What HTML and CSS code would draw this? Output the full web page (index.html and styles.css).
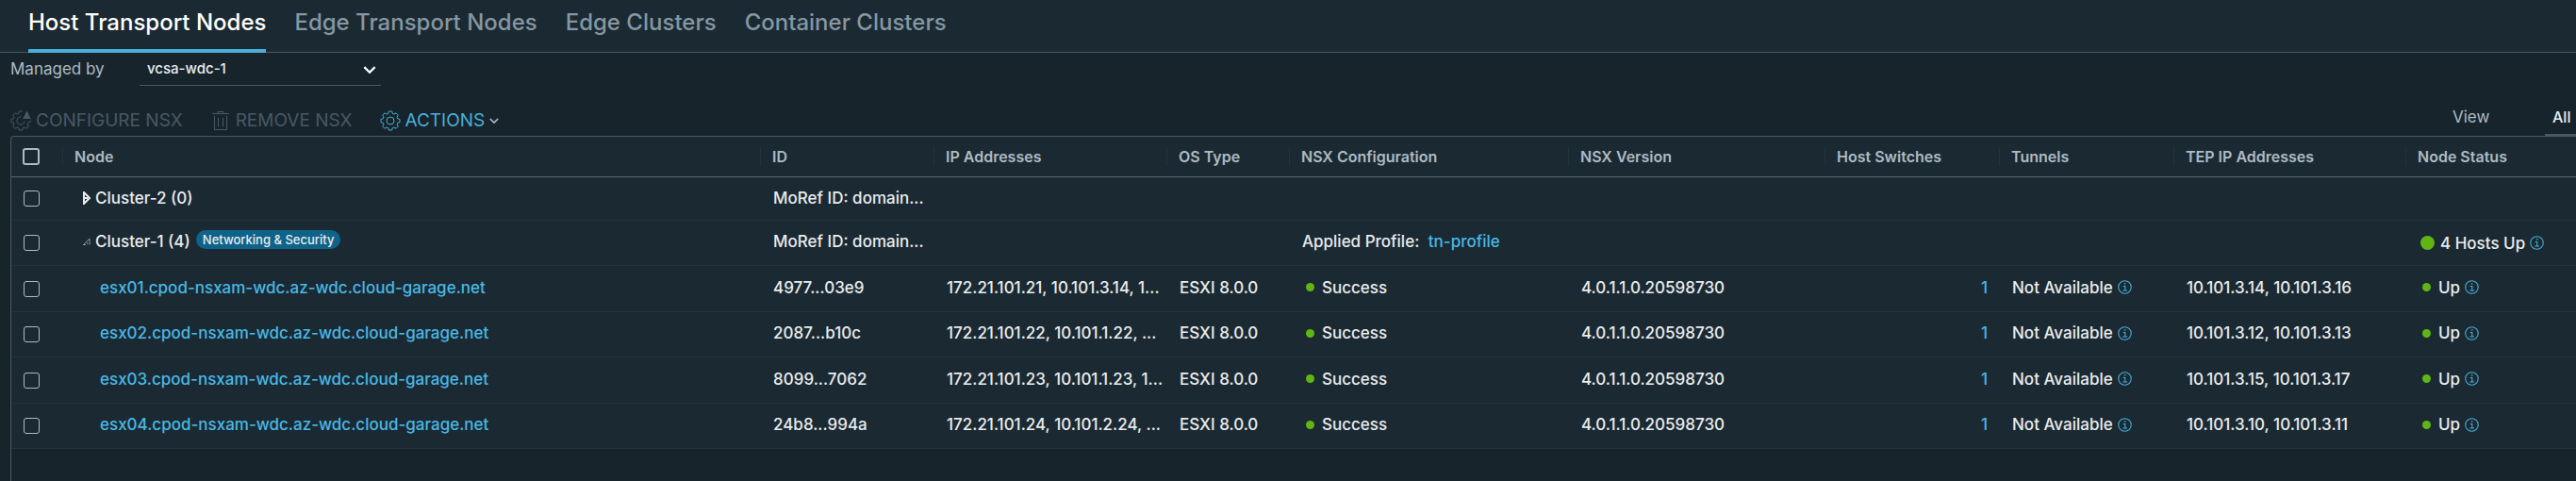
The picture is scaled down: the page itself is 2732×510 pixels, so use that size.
FILE: index.html
```html
<!DOCTYPE html>
<html lang="en">
<head>
<meta charset="utf-8">
<title>Host Transport Nodes</title>
<link rel="stylesheet" href="styles.css">
</head>
<body>
<svg class="sprite" aria-hidden="true">
  <symbol id="gear" viewBox="0 0 22 22">
    <path d="M9.300 1h3.400l.5 2.400 1.700.7 2.100-1.300 2.300 2.300-1.300 2.100.7 1.700 2.300.5v3.300l-2.300.5-.7 1.700 1.300 2.100-2.300 2.300-2.100-1.300-1.700.7-.5 2.300H9.300l-.5-2.300-1.700-.7-2.100 1.300-2.300-2.300 1.300-2.100-.7-1.700-2.300-.5V9.400l2.300-.5.7-1.700-1.300-2.100 2.300-2.300 2.100 1.300 1.700-.7z"/>
    <circle cx="11" cy="11" r="4"/>
  </symbol>
  <symbol id="gear-alert" viewBox="0 0 22 22">
    <path d="M12.500 1H9.300l-.5 2.400-1.700.7L5 2.800 2.700 5.100 4 7.200l-.7 1.700-2.300.5v3.300l2.300.5.7 1.700-1.300 2.100L5 19.300l2.100-1.300 1.700.7.5 2.300h3.400l.5-2.300 1.700-.7 2.100 1.300 2.300-2.300-1.300-2.100.7-1.700 2.300-.5V10.500"/>
    <path d="M11.500 7a4 4 0 1 0 3.500 4.500"/>
    <path class="solid" d="M17.500.5l4.200 8.500h-8.400z"/>
  </symbol>
  <symbol id="trash" viewBox="0 0 18 22">
    <path d="M2.500 6v14.500h13V6M0 3.500h18M6 3.500V1.500h6v2M6.500 8v9.500M11.500 8v9.500"/>
  </symbol>
  <symbol id="caret" viewBox="0 0 12 8"><path d="M1 1l5 5 5-5"/></symbol>
  <symbol id="info" viewBox="0 0 14 14">
    <circle cx="7" cy="7" r="6.300"/>
    <path d="M5.300 6H7.300v4.300M5 10.300h4.400M6.400 3.600h1.500"/>
  </symbol>
  <symbol id="closed" viewBox="0 0 8 14"><path d="M1 1l6 6-6 6zM2 7h3"/></symbol>
  <symbol id="open" viewBox="0 0 8 8"><path d="M0 7.500h3M1 7l6-6v6.500M4 5l1 2"/></symbol>
</svg>

<nav class="tabs">
  <a class="tab active" href="#host" aria-current="page">Host Transport Nodes</a>
  <a class="tab" href="#edge">Edge Transport Nodes</a>
  <a class="tab" href="#edge-clusters">Edge Clusters</a>
  <a class="tab" href="#containers">Container Clusters</a>
</nav>

<main>
  <div class="managed">
    <label for="manager">Managed by</label>
    <div class="select">
      <select id="manager"><option>vcsa-wdc-1</option></select>
      <svg class="caret"><use href="#caret"/></svg>
    </div>
  </div>

  <div class="toolbar">
    <button class="action" type="button" disabled><svg class="tool"><use href="#gear-alert"/></svg>CONFIGURE NSX</button>
    <button class="action" type="button" disabled><svg class="tool"><use href="#trash"/></svg>REMOVE NSX</button>
    <button class="action live" type="button"><svg class="tool"><use href="#gear"/></svg>ACTIONS<svg class="drop"><use href="#caret"/></svg></button>
    <div class="view">
      <label for="view">View</label>
      <select id="view"><option>All</option></select>
    </div>
  </div>

  <table class="grid">
    <colgroup>
      <col class="c-check"><col><col class="c-id"><col class="c-ip"><col class="c-os"><col class="c-config">
      <col class="c-version"><col class="c-switch"><col class="c-switch"><col class="c-tep"><col class="c-status">
    </colgroup>
    <thead>
      <tr>
        <th class="check"><input type="checkbox" aria-label="Select all"></th>
        <th><span>Node</span></th><th><span>ID</span></th><th><span>IP Addresses</span></th><th><span>OS Type</span></th>
        <th><span>NSX Configuration</span></th><th><span>NSX Version</span></th><th><span>Host Switches</span></th>
        <th><span>Tunnels</span></th><th><span>TEP IP Addresses</span></th><th><span>Node Status</span></th>
      </tr>
    </thead>
    <tbody>
      <tr>
        <td class="check"><input type="checkbox" aria-label="Select Cluster-2"></td>
        <td><div class="cluster"><svg class="twist"><use href="#closed"/></svg>Cluster-2 (0)</div></td>
        <td>MoRef ID: domain...</td><td></td><td></td><td></td><td></td><td></td><td></td><td></td><td></td>
      </tr>
      <tr>
        <td class="check"><input type="checkbox" aria-label="Select Cluster-1"></td>
        <td><div class="cluster"><svg class="twist small"><use href="#open"/></svg>Cluster-1 (4)<span class="badge">Networking &amp; Security</span></div></td>
        <td>MoRef ID: domain...</td><td></td><td></td>
        <td>Applied Profile: <a class="profile" href="#profile">tn-profile</a></td>
        <td></td><td></td><td></td><td></td>
        <td><div class="status summary"><i class="dot large"></i>4 Hosts Up<svg class="info"><use href="#info"/></svg></div></td>
      </tr>
      <tr>
        <td class="check"><input type="checkbox" aria-label="Select esx01"></td>
        <td class="host"><a href="#esx01">esx01.cpod-nsxam-wdc.az-wdc.cloud-garage.net</a></td>
        <td>4977...03e9</td><td>172.21.101.21, 10.101.3.14, 1...</td><td>ESXI 8.0.0</td>
        <td><div class="status"><i class="dot"></i>Success</div></td><td>4.0.1.1.0.20598730</td>
        <td class="count"><a href="#sw1">1</a></td>
        <td><div class="note">Not Available<svg class="info"><use href="#info"/></svg></div></td>
        <td>10.101.3.14, 10.101.3.16</td>
        <td><div class="status"><i class="dot"></i>Up<svg class="info"><use href="#info"/></svg></div></td>
      </tr>
      <tr>
        <td class="check"><input type="checkbox" aria-label="Select esx02"></td>
        <td class="host"><a href="#esx02">esx02.cpod-nsxam-wdc.az-wdc.cloud-garage.net</a></td>
        <td>2087...b10c</td><td>172.21.101.22, 10.101.1.22, ...</td><td>ESXI 8.0.0</td>
        <td><div class="status"><i class="dot"></i>Success</div></td><td>4.0.1.1.0.20598730</td>
        <td class="count"><a href="#sw2">1</a></td>
        <td><div class="note">Not Available<svg class="info"><use href="#info"/></svg></div></td>
        <td>10.101.3.12, 10.101.3.13</td>
        <td><div class="status"><i class="dot"></i>Up<svg class="info"><use href="#info"/></svg></div></td>
      </tr>
      <tr>
        <td class="check"><input type="checkbox" aria-label="Select esx03"></td>
        <td class="host"><a href="#esx03">esx03.cpod-nsxam-wdc.az-wdc.cloud-garage.net</a></td>
        <td>8099...7062</td><td>172.21.101.23, 10.101.1.23, 1...</td><td>ESXI 8.0.0</td>
        <td><div class="status"><i class="dot"></i>Success</div></td><td>4.0.1.1.0.20598730</td>
        <td class="count"><a href="#sw3">1</a></td>
        <td><div class="note">Not Available<svg class="info"><use href="#info"/></svg></div></td>
        <td>10.101.3.15, 10.101.3.17</td>
        <td><div class="status"><i class="dot"></i>Up<svg class="info"><use href="#info"/></svg></div></td>
      </tr>
      <tr>
        <td class="check"><input type="checkbox" aria-label="Select esx04"></td>
        <td class="host"><a href="#esx04">esx04.cpod-nsxam-wdc.az-wdc.cloud-garage.net</a></td>
        <td>24b8...994a</td><td>172.21.101.24, 10.101.2.24, ...</td><td>ESXI 8.0.0</td>
        <td><div class="status"><i class="dot"></i>Success</div></td><td>4.0.1.1.0.20598730</td>
        <td class="count"><a href="#sw4">1</a></td>
        <td><div class="note">Not Available<svg class="info"><use href="#info"/></svg></div></td>
        <td>10.101.3.10, 10.101.3.11</td>
        <td><div class="status"><i class="dot"></i>Up<svg class="info"><use href="#info"/></svg></div></td>
      </tr>
    </tbody>
  </table>
  <div class="rest"></div>
</main>
</body>
</html>
```
FILE: styles.css
```css
* { box-sizing: border-box; }
body {
  margin: 0;
  min-height: 100vh;
  display: flex;
  flex-direction: column;
  background: #17242b;
  color: #e9ecef;
  font: 17px/24px Inter, "Open Sans", sans-serif;
}
a { color: #49b8e6; text-decoration: none; }
svg { fill: none; stroke: currentColor; flex: none; }
.solid { fill: currentColor; stroke: none; }
.sprite { display: none; }

.tabs {
  display: flex;
  gap: 30px;
  padding-left: 30px;
  background: #1b2a32;
  border-bottom: 1px solid #495865;
}
.tab {
  height: 55px;
  margin-bottom: -1px;
  padding-top: 12px;
  color: #8597a3;
  font-size: 24px;
  font-weight: 500;
}
.tab.active { height: 56px; color: #fff; border-bottom: 4px solid #49afd9; }

main { flex: 1; display: flex; flex-direction: column; }
select {
  appearance: none;
  width: 100%;
  border: 0;
  border-bottom: 1px solid #495865;
  background: transparent;
  color: #e9ecef;
  font: 500 15px/24px Inter, sans-serif;
}
.managed { display: flex; padding-left: 11px; color: #adbbc4; }
.managed label { flex: none; width: 137px; padding-top: 5px; }
.select { position: relative; flex: none; width: 256px; }
.select select { height: 35px; padding: 0 8px; }
.caret { position: absolute; right: 5px; top: 14px; width: 14px; height: 9px; color: #fff; stroke-width: 2; }

.toolbar { display: flex; align-items: flex-end; height: 53px; padding-left: 11px; }
.action {
  display: flex;
  align-items: center;
  gap: 5px;
  margin-right: 29px;
  padding: 0 0 4px;
  border: 0;
  background: none;
  color: #495865;
  font: 19px/24px Inter, sans-serif;
}
.action.live { color: #49afd9; }
.tool { width: 22px; height: 22px; }
.drop { width: 10px; height: 7px; stroke-width: 2; color: #adbbc4; }
.view { display: flex; margin-left: auto; color: #adbbc4; }
.view label { width: 98px; }
.view select { width: 33px; height: 32px; padding: 0 0 6px 8px; border-bottom-width: 2px; font-size: 16px; }

.grid {
  width: calc(100% - 11px);
  margin-left: 11px;
  table-layout: fixed;
  border-collapse: separate;
  border-spacing: 0;
  border: 1px solid #495865;
  border-width: 1px 0 0 1px;
  border-top-left-radius: 4px;
  background: #1b2a32;
}
.c-check { width: 54px; }
.c-id { width: 184px; }
.c-ip { width: 247px; }
.c-os { width: 130px; }
.c-config { width: 296px; }
.c-version { width: 272px; }
.c-switch { width: 185px; }
.c-tep { width: 246px; }
.c-status { width: 181px; }
th {
  height: 43px;
  padding: 0 0 1px;
  border-bottom: 1px solid #566571;
  color: #adbbc4;
  font-size: 16px;
  font-weight: 600;
  line-height: 20px;
  text-align: left;
}
th span { display: block; padding-left: 12px; border-left: 1px solid #21333b; }
td {
  height: 48px;
  padding: 0 0 3px 14px;
  border-bottom: 1px solid #21333b;
  font-weight: 500;
  white-space: nowrap;
}
tbody tr:nth-child(odd) td { height: 49px; }
tbody tr:first-child td { height: 46px; padding-bottom: 1px; }
th.check { padding-left: 12px; }
td.check { padding: 0 0 0 13px; }
input {
  appearance: none;
  display: block;
  width: 17px;
  height: 17px;
  margin: 0;
  border: 1px solid #adbbc4;
  border-radius: 3px;
}
th input { width: 18px; height: 18px; border-width: 2px; }
.cluster { display: flex; align-items: center; padding-left: 8px; }
.twist { width: 8px; height: 14px; margin-right: 5px; stroke-width: 2; }
.twist.small { height: 8px; color: #8597a3; stroke-width: 1; }
.badge {
  align-self: flex-start;
  margin-left: 6px;
  padding: 0 7px;
  border-radius: 10px;
  background: #0f6388;
  font-size: 13px;
  line-height: 20px;
}
td.host { padding-left: 40px; }
.count { padding-right: 12px; text-align: right; }
.profile { margin-left: 5px; }
.status, .note { display: flex; align-items: center; gap: 5px; }
.status { padding-left: 4px; }
.dot { width: 9px; height: 9px; margin-right: 3px; border-radius: 50%; background: #60b515; }
.dot.large { width: 15px; height: 15px; margin-right: 1px; }
.summary { padding: 3px 0 0 2px; }
.info { width: 15px; height: 15px; color: #49afd9; }
.rest { flex: 1; margin-left: 11px; border-left: 1px solid #495865; }
```
